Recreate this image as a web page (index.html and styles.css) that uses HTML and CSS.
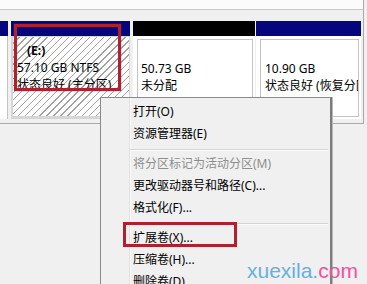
FILE: index.html
```html
<!DOCTYPE html>
<html lang="zh-CN">
<head>
<meta charset="utf-8">
<title>磁盘管理</title>
<link rel="stylesheet" href="styles.css">
</head>
<body>
<div class="top"></div>
<div class="frame">
  <div class="cols">
    <div class="col col-left">
      <div class="bar"></div>
      <div class="body"></div>
    </div>
    <div class="col col-e">
      <div class="bar"></div>
      <div class="body">
        <div class="inner hatch">
          <div class="label">(E:)</div>
          <div>57.10 GB NTFS</div>
          <div>状态良好 (主分区)</div>
        </div>
      </div>
    </div>
    <div class="col col-un">
      <div class="bar black"></div>
      <div class="body">
        <div class="inner">
          <div>&nbsp;</div>
          <div>50.73 GB</div>
          <div>未分配</div>
        </div>
      </div>
    </div>
    <div class="col col-rec">
      <div class="bar"></div>
      <div class="body">
        <div class="inner">
          <div>&nbsp;</div>
          <div>10.90 GB</div>
          <div>状态良好 (恢复分区)</div>
        </div>
      </div>
    </div>
  </div>
</div>
<div class="mark-e"></div>

<div class="menu">
  <div class="item">打开(O)</div>
  <div class="item">资源管理器(E)</div>
  <div class="sep"></div>
  <div class="item disabled">将分区标记为活动分区(M)</div>
  <div class="item">更改驱动器号和路径(C)...</div>
  <div class="item">格式化(F)...</div>
  <div class="sep"></div>
  <div class="item">扩展卷(X)...</div>
  <div class="item">压缩卷(H)...</div>
  <div class="item">删除卷(D)...</div>
  <div class="mark-x"></div>
</div>

<div class="watermark"><span class="wm-blue">xuexila.</span><span class="wm-pink">com</span></div>
</body>
</html>
```

FILE: styles.css
```css
html, body {
  margin: 0;
  padding: 0;
}
body {
  width: 367px;
  height: 284px;
  overflow: hidden;
  background: #f0f0f0;
  font-family: "Noto Sans", "Noto Sans CJK SC", sans-serif;
  font-size: 12px;
  color: #000;
  position: relative;
}
.top {
  width: 363px;
  height: 9px;
  background: #fbfbfb;
  border-bottom: 1px solid #c8c8c8;
  border-right: 1px solid #a8a8a8;
}
.frame {
  width: 363px;
  padding: 11px 0 4px;
  border-right: 1px solid #a8a8a8;
  border-bottom: 1px solid #a8a8a8;
  background: #f0f0f0;
}
.cols {
  display: flex;
  height: 98px;
}
.col {
  display: flex;
  flex-direction: column;
  overflow: hidden;
}
.bar {
  height: 15px;
  background: #05057e;
  flex: none;
}
.bar.black {
  background: #000;
}
.body {
  flex: 1;
  background: #fff;
  display: flex;
  flex-direction: column;
  min-height: 0;
}
.inner {
  flex: 1;
  border: 1px solid #c4c4c4;
  padding: 5px 0 0 4px;
  line-height: 17px;
  white-space: nowrap;
  overflow: hidden;
}
.col-left {
  width: 8px;
}
.col-left .body {
  border-right: 1px solid #c4c4c4;
}
.col-e {
  width: 119px;
  margin-left: 3px;
}
.col-e .body {
  background: #d6d6d6;
  padding: 1px 1px 3px 2px;
}
.col-e .inner {
  border: none;
  padding-top: 5px;
}
.hatch {
  background: repeating-linear-gradient(135deg, #ffffff 0 4px, #a2a2a2 4px 5px);
}
.label {
  font-weight: bold;
  padding-left: 10px;
}
.col-un {
  width: 122px;
  margin-left: 3px;
}
.col-un .body {
  padding: 3px 2px 2px 4px;
}
.col-un .inner {
  padding: 3px 0 0 3px;
}
.col-rec {
  width: 105px;
  margin-left: 1px;
}
.col-rec .body {
  padding: 3px 2px 2px 4px;
}
.col-rec .inner {
  padding: 3px 0 0 4px;
}
.mark-e {
  position: absolute;
  left: 14px;
  top: 24px;
  width: 107px;
  height: 67px;
  box-sizing: border-box;
  border: 3px solid #b1202f;
  box-shadow: 0 0 1px rgba(200, 60, 90, 0.7);
}
.menu {
  position: absolute;
  left: 100px;
  top: 97px;
  width: 229px;
  height: 183px;
  padding-top: 3px;
  overflow: hidden;
  background: #f0f0f0;
  border: 1px solid #8a8a8a;
  border-bottom: none;
  border-right: 2px solid #7c7c7c;
  box-shadow: 1px 0 0 #b8b8b8;
}
.menu::before {
  content: "";
  position: absolute;
  left: 28px;
  top: 0;
  bottom: 0;
  width: 1px;
  background: #e2e2e2;
  border-right: 1px solid #f8f8f8;
}
.item {
  position: relative;
  height: 22px;
  line-height: 22px;
  padding-left: 32px;
  white-space: nowrap;
}
.item.disabled {
  color: #8e8e8e;
}
.sep {
  position: relative;
  margin: 4px 2px 2px 29px;
  border-top: 1px solid #d4d4d4;
  border-bottom: 1px solid #fcfcfc;
}
.mark-x {
  position: absolute;
  left: 22px;
  top: 124px;
  width: 114px;
  height: 25px;
  box-sizing: border-box;
  border: 3px solid #b1202f;
}
.watermark {
  position: absolute;
  left: 247px;
  top: 260px;
  font-family: "Liberation Sans", Arial, sans-serif;
  font-size: 21px;
  line-height: 21px;
  white-space: nowrap;
}
.wm-blue {
  color: #64b0e2;
}
.wm-pink {
  color: #f0529e;
}
```
